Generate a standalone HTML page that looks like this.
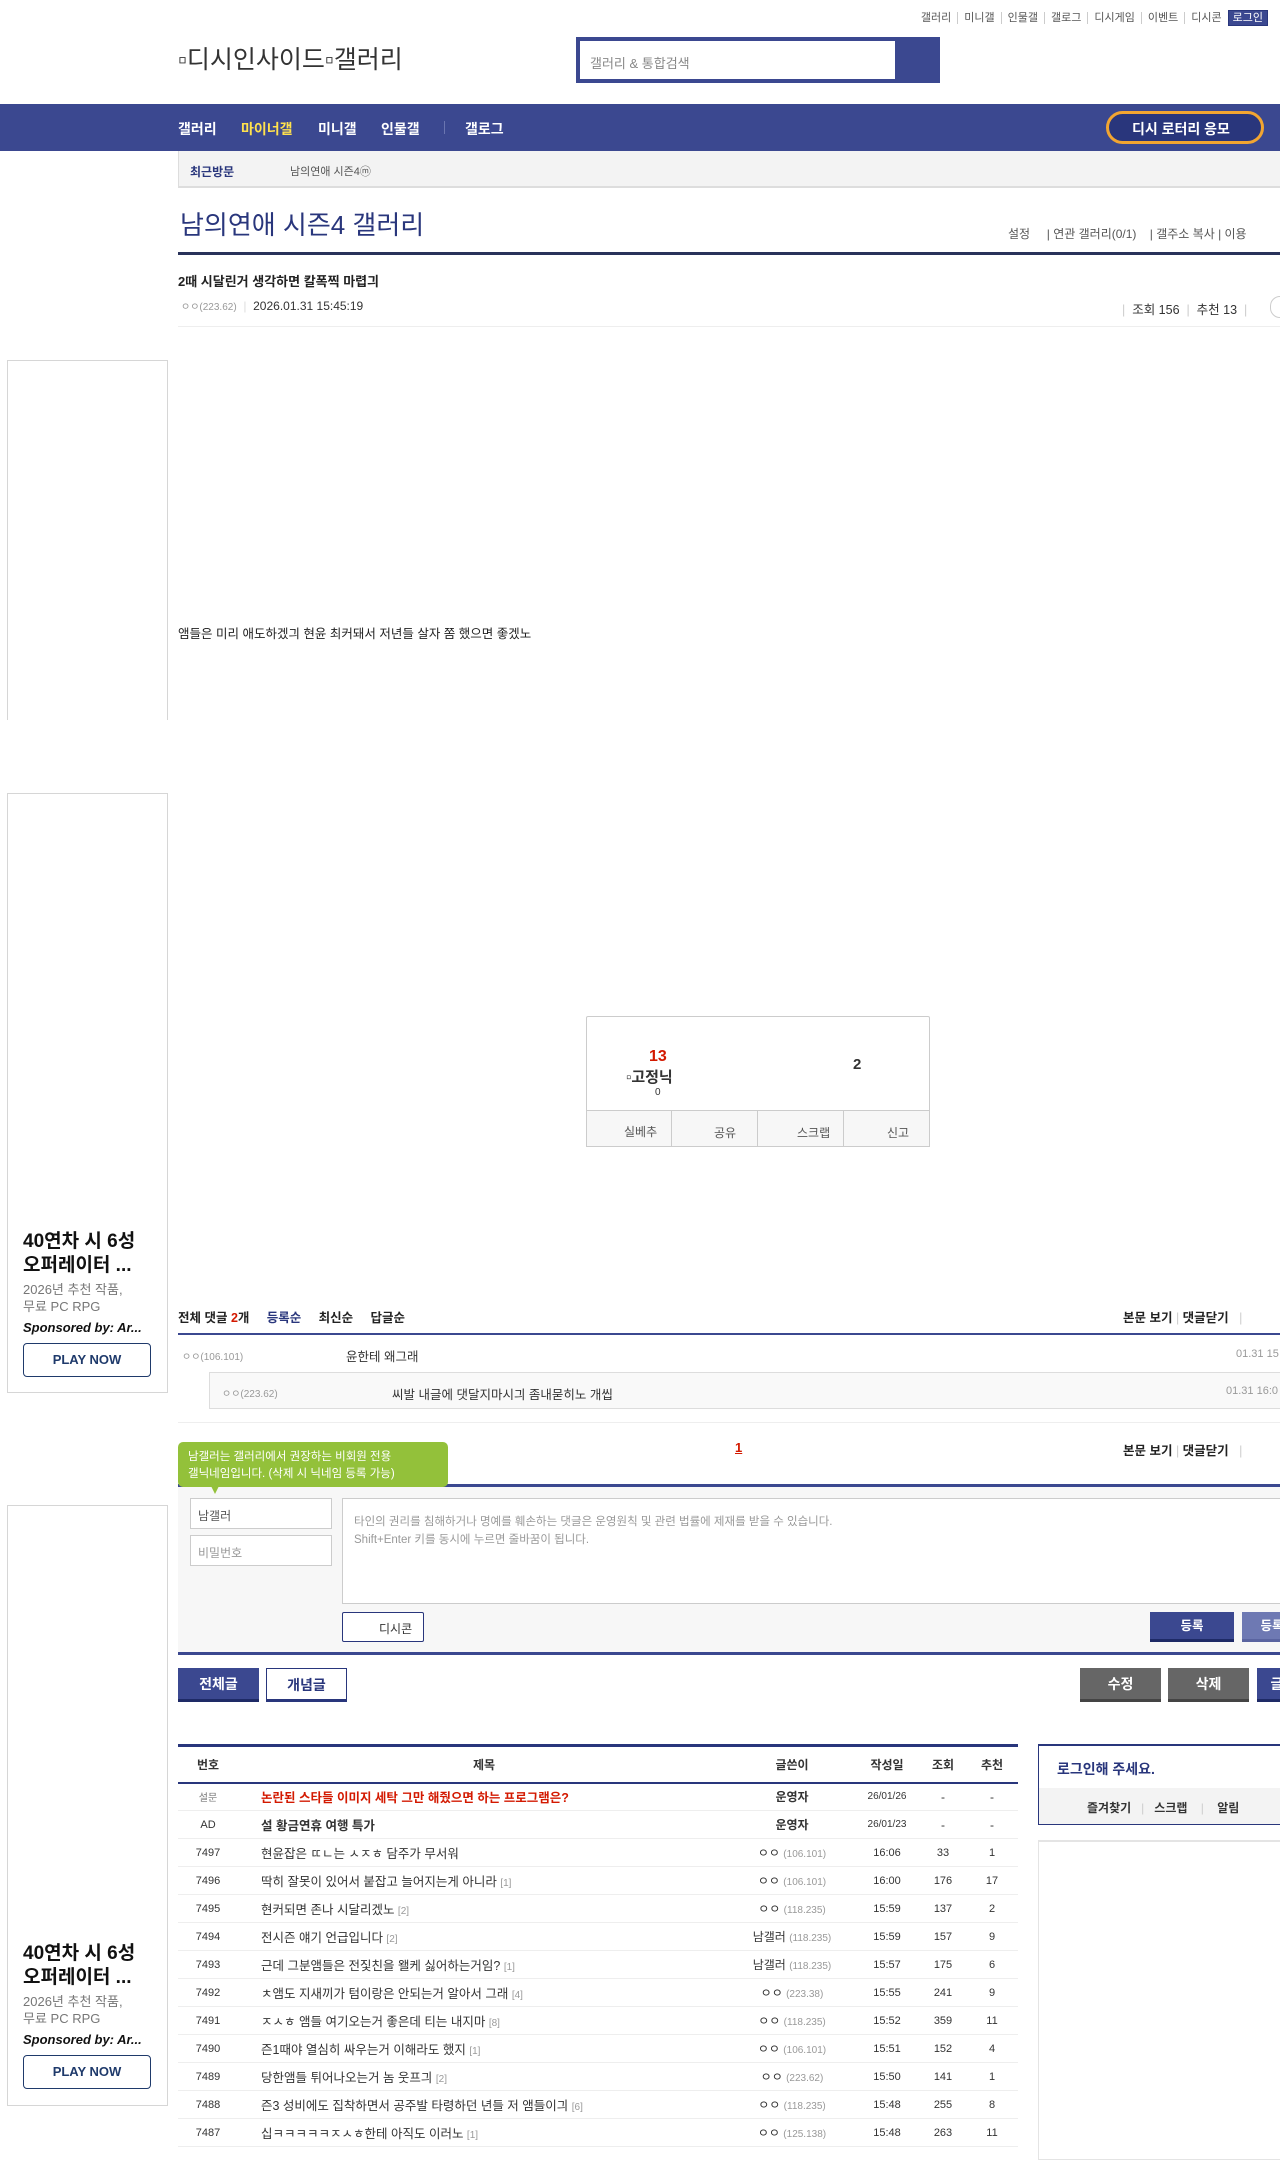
<!DOCTYPE html>
<html><head><meta charset="utf-8"><style>
*{margin:0;padding:0;box-sizing:border-box}
body{width:1280px;height:2152px;overflow:hidden;position:relative;background:#fff;font-family:"Liberation Sans","Noto Sans CJK KR",sans-serif;color:#333;font-size:12px}
.a{position:absolute;white-space:nowrap}
.b{position:absolute}
.toplinks{right:12px;top:9px;font-size:11px;color:#555}
.toplinks span{padding:0 6px;border-right:1px solid #ccc}
.nav{left:0;top:104px;width:1280px;height:47px;background:#3b4890}
.nav .a{color:#fff;font-weight:bold;font-size:14px;top:15px}
.ad{border:1px solid #d6d6d6;left:7px;width:161px}
.adtxt{left:23px;font-weight:bold;font-size:19px;color:#111;line-height:24px}
.play{left:23px;width:128px;height:34px;border:1px solid #1f3a6b;border-radius:4px;color:#1f3a6b;font-weight:bold;font-size:13px;text-align:center;line-height:32px}
table{border-collapse:collapse;table-layout:fixed}
.list{position:absolute;left:178px;top:1744px;width:840px;border-top:3px solid #29367c}
.list td{height:28px;border-bottom:1px solid #eee;font-size:12px;text-align:center;color:#333;white-space:nowrap;overflow:hidden}
.list th{height:37px;border-bottom:2px solid #29367c;font-size:12px;font-weight:bold}
.list td.t{text-align:left;padding-left:23px;font-size:12.5px}
.ip{color:#999;font-size:10px}
.cnt{color:#999;font-size:10px}
.btn{position:absolute;height:34px;color:#fff;font-weight:bold;font-size:14px;text-align:center;line-height:32px;border-bottom:3px solid #1e2a66}
</style></head><body>
<div class="a toplinks"><span>갤러리</span><span>미니갤</span><span>인물갤</span><span>갤로그</span><span>디시게임</span><span>이벤트</span><span style="border:0">디시콘</span><b style="background:#3b4890;color:#fff;font-weight:normal;padding:1px 4px;border:1px solid #29367c">로그인</b></div>
<div class="a" style="left:178px;top:40px;font-size:25px;color:#333">▫디시인사이드▫갤러리</div>
<div class="b" style="left:576px;top:37px;width:364px;height:46px;background:#3b4890"></div>
<div class="b" style="left:580px;top:41px;width:315px;height:38px;background:#fff"></div>
<div class="a" style="left:590px;top:53px;font-size:13px;color:#888">갤러리 &amp; 통합검색</div>
<div class="b nav">
<div class="a" style="left:178px">갤러리</div>
<div class="a" style="left:241px;color:#ffe14d">마이너갤</div>
<div class="a" style="left:318px">미니갤</div>
<div class="a" style="left:381px">인물갤</div>
<div class="b" style="left:444px;top:17px;width:1px;height:13px;background:#6a75b0"></div>
<div class="a" style="left:465px">갤로그</div>
<div class="b" style="left:1106px;top:7px;width:158px;height:33px;border:3px solid #f2a531;border-radius:17px;background:#29367c"></div>
<div class="a" style="left:1132px;top:15px">디시 로터리 응모</div>
</div>
<div class="b" style="left:178px;top:151px;width:1102px;height:37px;background:#f3f3f3;border-bottom:2px solid #ddd;border-left:1px solid #ddd"></div>
<div class="a" style="left:190px;top:163px;font-size:12px;font-weight:bold;color:#29367c">최근방문</div>
<div class="a" style="left:290px;top:163px;font-size:11px;color:#555">남의연애 시즌4ⓜ</div>
<div class="a" style="left:180px;top:205px;font-size:26px;color:#29367c">남의연애 시즌4 갤러리</div>
<div class="a" style="left:1008px;top:225px;font-size:12px;color:#555">설정 &nbsp;&nbsp;&nbsp;&nbsp;| 연관 갤러리(0/1) &nbsp;&nbsp;&nbsp;| 갤주소 복사 | 이용</div>
<div class="b" style="left:178px;top:252px;width:1102px;height:3px;background:#29325a"></div>
<div class="a" style="left:178px;top:271px;font-size:13px;font-weight:bold;color:#222">2때 시달린거 생각하면 칼폭찍 마렵긔</div>
<div class="a" style="left:181px;top:298px;font-size:12px;color:#333"><span class="ip">ㅇㅇ(223.62)</span> &nbsp;<span style="color:#ddd">|</span>&nbsp; 2026.01.31 15:45:19</div>
<div class="a" style="left:1122px;top:299px;font-size:12.5px;color:#333"><span style="color:#ccc">|</span>&nbsp; 조회 156 &nbsp;<span style="color:#ccc">|</span>&nbsp; 추천 13 &nbsp;<span style="color:#ccc">|</span></div>
<div class="b" style="left:1270px;top:296px;width:20px;height:22px;border:1px solid #ccc;border-radius:11px"></div>
<div class="b" style="left:178px;top:326px;width:1102px;height:1px;background:#eee"></div>
<div class="b ad" style="top:360px;height:360px;border-bottom:0"></div>
<div class="a" style="left:178px;top:623px;font-size:12.5px;color:#222">앰들은 미리 애도하겠긔 현윤 최커돼서 저년들 살자 쫌 했으면 좋겠노</div>
<div class="b ad" style="top:793px;height:600px"></div>
<div class="a adtxt" style="top:1230px">40연차 시 6성<br>오퍼레이터 ...</div>
<div class="a" style="left:23px;top:1281px;font-size:13px;color:#777;line-height:17px">2026년 추천 작품,<br>무료 PC RPG</div>
<div class="a" style="left:23px;top:1320px;font-size:13px;font-weight:bold;font-style:italic;color:#111">Sponsored by: Ar...</div>
<div class="a play" style="top:1343px">PLAY NOW</div>
<div class="b ad" style="top:1505px;height:601px"></div>
<div class="a adtxt" style="top:1942px">40연차 시 6성<br>오퍼레이터 ...</div>
<div class="a" style="left:23px;top:1993px;font-size:13px;color:#777;line-height:17px">2026년 추천 작품,<br>무료 PC RPG</div>
<div class="a" style="left:23px;top:2032px;font-size:13px;font-weight:bold;font-style:italic;color:#111">Sponsored by: Ar...</div>
<div class="a play" style="top:2055px">PLAY NOW</div>
<div class="b" style="left:586px;top:1016px;width:344px;height:131px;border:1px solid #ccc;border-radius:2px"></div>
<div class="a" style="left:649px;top:1048px;font-size:16px;font-weight:bold;color:#d31900">13</div>
<div class="a" style="left:626px;top:1066px;font-size:15px;font-weight:bold;color:#333">▫고정닉</div>
<div class="a" style="left:655px;top:1087px;font-size:10px;color:#333">0</div>
<div class="a" style="left:853px;top:1056px;font-size:15px;font-weight:bold;color:#333">2</div>
<div class="b" style="left:586px;top:1110px;width:344px;height:37px;background:#f7f7f7;border:1px solid #ccc"></div>
<div class="b" style="left:671px;top:1110px;width:1px;height:37px;background:#ccc"></div>
<div class="b" style="left:757px;top:1110px;width:1px;height:37px;background:#ccc"></div>
<div class="b" style="left:843px;top:1110px;width:1px;height:37px;background:#ccc"></div>
<div class="a" style="left:624px;top:1123px;font-size:12px;color:#555">실베추</div>
<div class="a" style="left:714px;top:1124px;font-size:12px;color:#555">공유</div>
<div class="a" style="left:797px;top:1124px;font-size:12px;color:#555">스크랩</div>
<div class="a" style="left:887px;top:1124px;font-size:12px;color:#555">신고</div>
<div class="a" style="left:178px;top:1307px;font-size:12.5px;font-weight:bold;color:#222">전체 댓글 <span style="color:#d31900">2</span>개 &nbsp;&nbsp;&nbsp;&nbsp;<span style="color:#29367c">등록순</span> &nbsp;&nbsp;&nbsp;&nbsp;최신순 &nbsp;&nbsp;&nbsp;&nbsp;답글순</div>
<div class="a" style="left:1123px;top:1307px;font-size:12.5px;font-weight:bold;color:#222">본문 보기 <span style="color:#ccc;font-weight:normal">|</span> 댓글닫기 &nbsp;&nbsp;<span style="color:#ccc;font-weight:normal">|</span></div>
<div class="b" style="left:178px;top:1333px;width:1102px;height:2px;background:#3b4890"></div>
<div class="a ip" style="left:182px;top:1348px">ㅇㅇ(106.101)</div>
<div class="a" style="left:346px;top:1346px;font-size:12.5px;color:#333">윤한테 왜그래</div>
<div class="a" style="left:1236px;top:1348px;font-size:11px;color:#999">01.31 15</div>
<div class="b" style="left:209px;top:1372px;width:1080px;height:37px;background:#f9f9f9;border:1px solid #ddd"></div>
<div class="a ip" style="left:222px;top:1385px">ㅇㅇ(223.62)</div>
<div class="a" style="left:392px;top:1384px;font-size:12.5px;color:#333">씨발 내글에 댓달지마시긔 좀내묻히노 개씹</div>
<div class="a" style="left:1226px;top:1385px;font-size:11px;color:#999">01.31 16:0</div>
<div class="b" style="left:178px;top:1422px;width:1102px;height:1px;background:#eee"></div>
<div class="a" style="left:735px;top:1440px;font-size:13px;font-weight:bold;color:#d31900;text-decoration:underline">1</div>
<div class="a" style="left:1123px;top:1440px;font-size:12.5px;font-weight:bold;color:#222">본문 보기 <span style="color:#ccc;font-weight:normal">|</span> 댓글닫기 &nbsp;&nbsp;<span style="color:#ccc;font-weight:normal">|</span></div>
<div class="b" style="left:178px;top:1484px;width:1102px;height:171px;background:#f7f7f7;border-top:3px solid #3b4890;border-bottom:3px solid #3b4890"></div>
<div class="b" style="left:178px;top:1442px;width:270px;height:45px;background:#93c13a;border-radius:5px"></div>
<div class="b" style="left:211px;top:1486px;width:0;height:0;border-left:4px solid transparent;border-right:4px solid transparent;border-top:8px solid #93c13a"></div>
<div class="a" style="left:188px;top:1449px;font-size:11.5px;color:#fff;line-height:17px">남갤러는 갤러리에서 권장하는 비회원 전용<br>갤닉네임입니다. (삭제 시 닉네임 등록 가능)</div>
<div class="b" style="left:190px;top:1498px;width:142px;height:31px;background:#fff;border:1px solid #ccc"></div>
<div class="a" style="left:198px;top:1507px;font-size:12px;color:#555">남갤러</div>
<div class="b" style="left:190px;top:1535px;width:142px;height:31px;background:#fff;border:1px solid #ccc"></div>
<div class="a" style="left:198px;top:1544px;font-size:12px;color:#999">비밀번호</div>
<div class="b" style="left:342px;top:1498px;width:950px;height:106px;background:#fff;border:1px solid #ccc"></div>
<div class="a" style="left:354px;top:1513px;font-size:11.5px;color:#999;line-height:18px">타인의 권리를 침해하거나 명예를 훼손하는 댓글은 운영원칙 및 관련 법률에 제재를 받을 수 있습니다.<br>Shift+Enter 키를 동시에 누르면 줄바꿈이 됩니다.</div>
<div class="b" style="left:342px;top:1612px;width:82px;height:30px;background:#fff;border:1px solid #29367c;border-radius:2px"></div>
<div class="a" style="left:379px;top:1620px;font-size:12px;color:#333">디시콘</div>
<div class="btn" style="left:1150px;top:1612px;width:84px;height:30px;line-height:28px;font-size:12.5px;background:#3b4890">등록</div>
<div class="btn" style="left:1242px;top:1612px;width:60px;height:30px;line-height:28px;font-size:12.5px;background:#6e79b3;border-bottom-color:#5a64a0">등록</div>
<div class="btn" style="left:178px;top:1668px;width:81px;background:#3b4890">전체글</div>
<div class="btn" style="left:266px;top:1668px;width:81px;background:#fff;color:#29367c;border:1px solid #29367c;border-bottom:3px solid #29367c">개념글</div>
<div class="btn" style="left:1080px;top:1668px;width:81px;background:#666;border-bottom-color:#444">수정</div>
<div class="btn" style="left:1168px;top:1668px;width:81px;background:#666;border-bottom-color:#444">삭제</div>
<div class="btn" style="left:1257px;top:1668px;width:40px;background:#3b4890">글</div>
<table class="list">
<colgroup><col style="width:60px"><col style="width:492px"><col style="width:124px"><col style="width:66px"><col style="width:46px"><col style="width:52px"></colgroup>
<tr><th>번호</th><th>제목</th><th>글쓴이</th><th>작성일</th><th>조회</th><th>추천</th></tr>
<tr><td style="font-size:10px;color:#777">설문</td><td class="t" style="color:#d31900;font-weight:bold">논란된 스타들 이미지 세탁 그만 해줬으면 하는 프로그램은?</td><td style="font-weight:bold">운영자</td><td style="font-size:10px">26/01/26</td><td>-</td><td>-</td></tr>
<tr><td style="font-size:11px">AD</td><td class="t" style="font-weight:bold">설 황금연휴 여행 특가</td><td style="font-weight:bold">운영자</td><td style="font-size:10px">26/01/23</td><td>-</td><td>-</td></tr>
<tr><td style="font-size:11px">7497</td><td class="t">현윤잡은 ㄸㄴ는 ㅅㅈㅎ 담주가 무서워</td><td>ㅇㅇ <span class="ip">(106.101)</span></td><td style="font-size:11px">16:06</td><td style="font-size:11px">33</td><td style="font-size:11px">1</td></tr>
<tr><td style="font-size:11px">7496</td><td class="t">딱히 잘못이 있어서 붙잡고 늘어지는게 아니라 <span class="cnt">[1]</span></td><td>ㅇㅇ <span class="ip">(106.101)</span></td><td style="font-size:11px">16:00</td><td style="font-size:11px">176</td><td style="font-size:11px">17</td></tr>
<tr><td style="font-size:11px">7495</td><td class="t">현커되면 존나 시달리겠노 <span class="cnt">[2]</span></td><td>ㅇㅇ <span class="ip">(118.235)</span></td><td style="font-size:11px">15:59</td><td style="font-size:11px">137</td><td style="font-size:11px">2</td></tr>
<tr><td style="font-size:11px">7494</td><td class="t">전시즌 얘기 언급입니다 <span class="cnt">[2]</span></td><td>남갤러 <span class="ip">(118.235)</span></td><td style="font-size:11px">15:59</td><td style="font-size:11px">157</td><td style="font-size:11px">9</td></tr>
<tr><td style="font-size:11px">7493</td><td class="t">근데 그분앰들은 전짗친을 왤케 싫어하는거임? <span class="cnt">[1]</span></td><td>남갤러 <span class="ip">(118.235)</span></td><td style="font-size:11px">15:57</td><td style="font-size:11px">175</td><td style="font-size:11px">6</td></tr>
<tr><td style="font-size:11px">7492</td><td class="t">ㅊ앰도 지새끼가 텀이랑은 안되는거 알아서 그래 <span class="cnt">[4]</span></td><td>ㅇㅇ <span class="ip">(223.38)</span></td><td style="font-size:11px">15:55</td><td style="font-size:11px">241</td><td style="font-size:11px">9</td></tr>
<tr><td style="font-size:11px">7491</td><td class="t">ㅈㅅㅎ 앰들 여기오는거 좋은데 티는 내지마 <span class="cnt">[8]</span></td><td>ㅇㅇ <span class="ip">(118.235)</span></td><td style="font-size:11px">15:52</td><td style="font-size:11px">359</td><td style="font-size:11px">11</td></tr>
<tr><td style="font-size:11px">7490</td><td class="t">즌1때야 열심히 싸우는거 이해라도 했지 <span class="cnt">[1]</span></td><td>ㅇㅇ <span class="ip">(106.101)</span></td><td style="font-size:11px">15:51</td><td style="font-size:11px">152</td><td style="font-size:11px">4</td></tr>
<tr><td style="font-size:11px">7489</td><td class="t">당한앰들 튀어나오는거 놈 웃프긔 <span class="cnt">[2]</span></td><td>ㅇㅇ <span class="ip">(223.62)</span></td><td style="font-size:11px">15:50</td><td style="font-size:11px">141</td><td style="font-size:11px">1</td></tr>
<tr><td style="font-size:11px">7488</td><td class="t">즌3 성비에도 집착하면서 공주발 타령하던 년들 저 앰들이긔 <span class="cnt">[6]</span></td><td>ㅇㅇ <span class="ip">(118.235)</span></td><td style="font-size:11px">15:48</td><td style="font-size:11px">255</td><td style="font-size:11px">8</td></tr>
<tr><td style="font-size:11px">7487</td><td class="t">십ㅋㅋㅋㅋㅋㅈㅅㅎ한테 아직도 이러노 <span class="cnt">[1]</span></td><td>ㅇㅇ <span class="ip">(125.138)</span></td><td style="font-size:11px">15:48</td><td style="font-size:11px">263</td><td style="font-size:11px">11</td></tr>
</table>
<div class="b" style="left:1038px;top:1744px;width:260px;height:81px;border:1px solid #29367c;border-top:2px solid #29367c"></div>
<div class="b" style="left:1039px;top:1788px;width:250px;height:36px;background:#f3f3f3"></div>
<div class="a" style="left:1057px;top:1759px;font-size:14px;font-weight:bold;color:#29367c">로그인해 주세요.</div>
<div class="a" style="left:1087px;top:1799px;font-size:12px;font-weight:bold;color:#333">즐겨찾기 &nbsp;&nbsp;<span style="color:#ccc;font-weight:normal">|</span>&nbsp;&nbsp; 스크랩 &nbsp;&nbsp;&nbsp;<span style="color:#ccc;font-weight:normal">|</span>&nbsp;&nbsp;&nbsp; 알림</div>
<div class="b" style="left:1038px;top:1840px;width:260px;height:320px;border:1px solid #e4e4e4;border-top:2px solid #e4e4e4"></div>
</body></html>
